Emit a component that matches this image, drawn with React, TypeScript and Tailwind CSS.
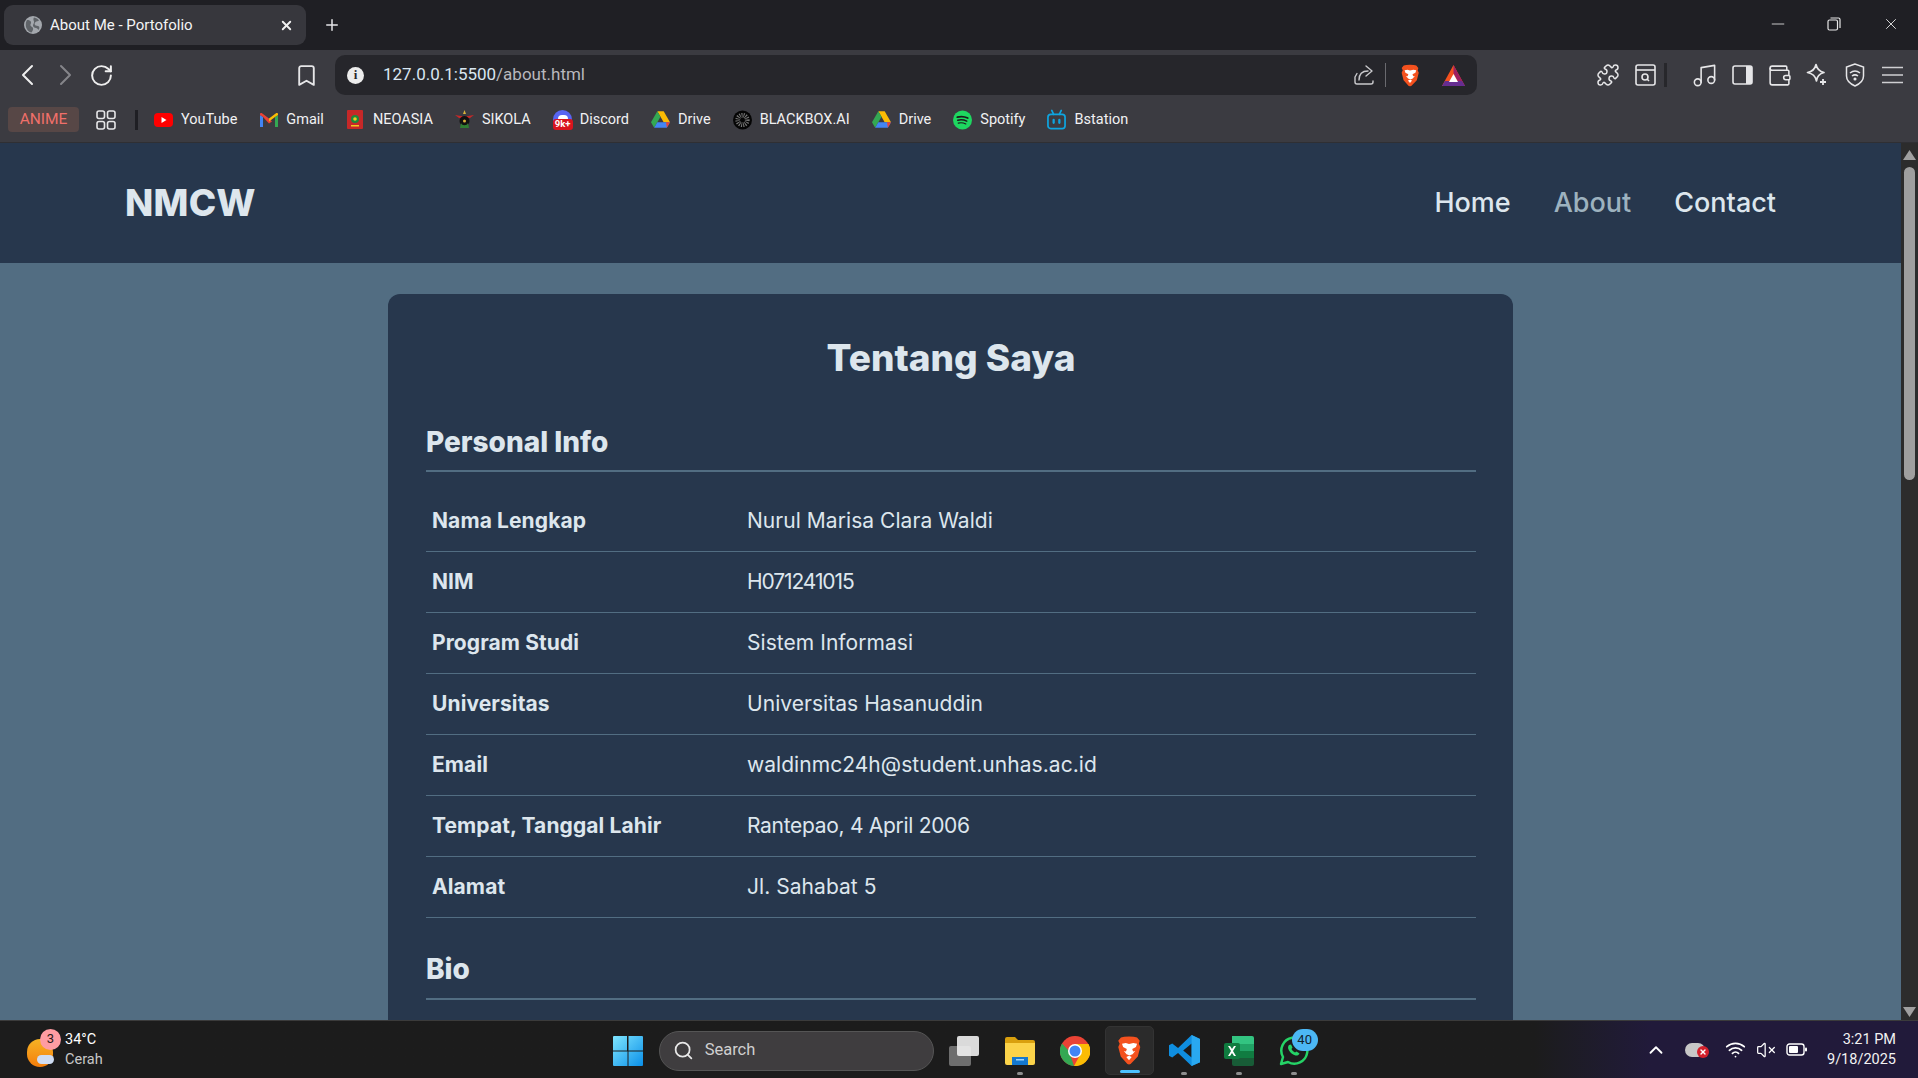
import React from "react";
import { RotateCw, Bookmark, Plus, X, Minus, Puzzle, Music, Wallet, Search, ChevronUp, Wifi, VolumeX } from "lucide-react";

const Brave = ({ s = 24 }: { s?: number }) => (
  <svg width={s} height={s + 3} viewBox="0 0 24 27">
    <path d="M12 .5 16.500 .8 19.500 1.500 22 4.500l-.8 2.700 1.300 3-2.300 9L13.500 26 12 26.500 10.500 26l-6.200-6.800-2.300-9 1.300-3L2 4.500 4.500 1.500 7.500 .8Z" fill="#f4511e" />
    <path d="M12 7.500 9 6.500 5.500 7.200l1 3 3.500 1.800-.8 2.500-2-.5 2.500 3 2.800 1.200 2.800-1.200 2.500-3-2 .5-.8-2.500 3.500-1.800 1-3-3.500-.7Z" fill="#fff" />
    <path d="M9.500 19.500 12 18.500l2.500 1L12 22.500Z" fill="#fff" />
  </svg>
);
const Drive = () => (
  <svg width="19" height="17" viewBox="0 0 24 21">
    <path d="M8 0h8l8 14h-8Z" fill="#fbbc04" />
    <path d="M8 0 0 14l4 7 8-14Z" fill="#34a853" />
    <path d="M8 14h16l-4 7H4Z" fill="#4285f4" />
    <path d="m20 21 4-7h-5Z" fill="#ea4335" />
  </svg>
);
const Bookmarklet = ({ icon, label, cls }: { icon: React.ReactNode; label: string; cls: string }) => (
  <div className={`flex items-center ${cls}`}>
    <span className="flex w-[19px] justify-center">{icon}</span>
    <span className="ml-[8px] text-[14.500px] text-[#f1f1f3]">{label}</span>
  </div>
);
const Tool = ({ children }: { children: React.ReactNode }) => (
  <span className="flex h-full w-[37.500px] items-center justify-center text-[#e6e6e8]">{children}</span>
);
const Row = ({ k, v, cls = "tracking-[0.05px]" }: { k: string; v: string; cls?: string }) => (
  <div className="flex h-[61px] items-center border-b border-[#526d82] px-[6px] text-[21px] text-[#dde6ed]">
    <span className="w-[315px] font-bold tracking-[0.1px]">{k}</span>
    <span className={cls}>{v}</span>
  </div>
);
const Dot = ({ cls }: { cls: string }) => <span className={`block h-[3px] rounded-full bg-[#8e8e8e] ${cls}`} />;

export default function App() {
  return (
    <div className="flex h-[1078px] w-[1918px] flex-col overflow-hidden bg-[#1f1f24] font-['Roboto',sans-serif] text-white">
      {/* tab strip */}
      <div className="flex h-[50px] shrink-0 items-start bg-[#1f1f24]">
        <div className="ml-[4px] mt-[5px] flex h-[40px] w-[302px] items-center rounded-[9px] bg-[#37373d] pl-[20px]">
          <svg width="18" height="18" viewBox="0 0 18 18"><circle cx="9" cy="9" r="9" fill="#a3a7ad" /><path d="M3 4c2 0 3.500.5 4 2s-1 2-.5 3.500 2 1 2.500 2.500-.5 3-1.500 4.500C4.500 16 2 13 1.800 9.500 1.700 7.500 2 5.500 3 4ZM10 1.500c2 .3 4 1.500 5 3-1 1-2.500.5-3.500 1.500s-1 2-.5 3 3 .5 4 1.500c.5.500.5 2-.5 3.500-.5-1-1.500-2-2.500-2-1.500 0-3-1-3-2.500S10.500 7 10 5.500 9 3 10 1.500Z" fill="#5f6368" /></svg>
          <span className="ml-[8px] text-[15px] text-[#f4f4f5]">About Me - Portofolio</span>
          <X size={15} strokeWidth={3} className="ml-auto mr-[12px] text-[#f1f1f1]" />
        </div>
        <Plus size={18} strokeWidth={2} className="ml-[17px] mt-[16px] text-[#e5e5e7]" />
        <div className="ml-auto mr-[18px] flex h-[48px] items-center text-[#e8e8e8]">
          <Minus size={20} strokeWidth={1} />
          <svg className="ml-[39px]" width="14" height="14" viewBox="0 0 14 14" fill="none" stroke="currentColor" strokeWidth="1.200"><rect x="1" y="3" width="9.500" height="10" rx="1.500" /><path d="M3.500 1h8A1.500 1.500 0 0 1 13 2.500V11" /></svg>
          <X className="ml-[41px]" size={18} strokeWidth={1.2} />
        </div>
      </div>
      {/* toolbar */}
      <div className="flex h-[45px] shrink-0 items-end bg-[#3b3b41]">
        <div className="flex h-[40px] w-[335px] items-center">
          <svg className="ml-[14px]" width="28" height="28" viewBox="0 0 28 28" fill="none" stroke="#eeeeee" strokeWidth="2" strokeLinecap="round" strokeLinejoin="round"><path d="M18 5 9 14l9 9" /></svg>
          <svg className="ml-[9px]" width="28" height="28" viewBox="0 0 28 28" fill="none" stroke="#85858a" strokeWidth="2" strokeLinecap="round" strokeLinejoin="round"><path d="m10 5 9 9-9 9" /></svg>
          <RotateCw size={25} strokeWidth={1.900} className="ml-[10px] text-[#eeeeee]" />
          <Bookmark size={25} strokeWidth={1.800} className="ml-[180px] text-[#e6e6e8]" />
        </div>
        <div className="flex h-[40px] w-[1142px] items-center rounded-[10px] bg-[#26262b]">
          <span className="ml-[12px] flex h-[17px] w-[17px] items-center justify-center rounded-full bg-[#ececec] font-['Liberation_Serif',serif] text-[13px] font-bold text-[#26262b]">i</span>
          <span className="ml-[19px] text-[17px] text-[#d9e7f2]">127.0.0.1:5500<span className="text-[#b8b8bd]">/about.html</span></span>
          <svg className="ml-auto" width="20" height="20" viewBox="0 0 20 20" fill="none" stroke="#c9c9cc" strokeWidth="1.400" strokeLinecap="round" strokeLinejoin="round"><path d="M3 8.500 1 12v5a2 2 0 0 0 2 2h14a2 2 0 0 0 2-2v-1" /><path d="M5 15c0-6 3-9 9-9" /><path d="M12 1l6 5-6 5" /></svg>
          <span className="ml-[11px] h-[24px] w-[1px] bg-[#6a6a6f]" />
          <span className="ml-[14px] flex"><Brave s={20} /></span>
          <svg className="ml-[22px] mr-[12px]" width="23" height="21" viewBox="0 0 23 21">
            <path d="M11.500 0 23 21H0Z" fill="#f4511e" />
            <path d="M11.500 0 23 21h-5L11.500 8Z" fill="#9e1f63" />
            <path d="M0 21l3-5h17l3 5Z" fill="#662d91" />
            <path d="M11.500 9 16 17H7Z" fill="#fff" />
          </svg>
        </div>
        <div className="flex h-[40px] flex-1 items-center pl-[112px]">
          <Tool><Puzzle size={24} strokeWidth={1.500} /></Tool>
          <Tool>
            <svg width="21" height="22" viewBox="0 0 21 22" fill="none" stroke="currentColor" strokeWidth="1.600"><rect x="1" y="1" width="19" height="20" rx="2" /><path d="M1 6h19" /><circle cx="10" cy="13" r="3" /><path d="m12 15 2 2" /></svg>
          </Tool>
          <span className="h-[24px] w-[3px] bg-[#27272b]" />
          <span className="w-[19px]" />
          <Tool><Music size={27} strokeWidth={1.400} /></Tool>
          <Tool>
            <svg width="21" height="20" viewBox="0 0 21 20"><rect x="1" y="1" width="19" height="18" rx="2" fill="none" stroke="currentColor" strokeWidth="1.600" /><path d="M14 1h4a2 2 0 0 1 2 2v14a2 2 0 0 1-2 2h-4Z" fill="currentColor" /></svg>
          </Tool>
          <Tool><Wallet size={25} strokeWidth={1.500} /></Tool>
          <Tool>
            <svg width="22" height="24" viewBox="0 0 22 24" fill="none" stroke="currentColor" strokeWidth="1.700" strokeLinejoin="round"><path d="M10 1.500c1 4.500 3.500 7 8 8-4.500 1-7 3.500-7.500 8.500C9.500 13 7 10.500 1.500 9.500c5.500-1 7.500-3.500 8.500-8Z" /><path d="M17 16v6M14 19h6" strokeWidth="1.800" /></svg>
          </Tool>
          <Tool>
            <svg width="20" height="24" viewBox="0 0 20 24" fill="none" stroke="currentColor" strokeWidth="1.500"><path d="M10 1 1.500 4v9c0 5 4 8 8.500 10 4.500-2 8.500-5 8.500-10V4Z" /><path d="M5 10c3-2.500 7-2.500 10 0M7 13c2-1.500 4-1.500 6 0" /><circle cx="10" cy="16" r=".8" fill="currentColor" /></svg>
          </Tool>
          <Tool>
            <svg width="21" height="18" viewBox="0 0 21 18" stroke="#cfcfd2" strokeWidth="1.600"><path d="M0 1.500h21M0 9h21M0 16.500h21" /></svg>
          </Tool>
        </div>
      </div>
      {/* bookmarks */}
      <div className="flex h-[48px] shrink-0 items-center border-b border-[#2f2f33] bg-[#3b3b41] pt-[2px]">
        <span className="ml-[8px] flex h-[25px] w-[71px] items-center justify-center rounded-[4px] bg-[#574746] text-[15.500px] text-[#f0706a]">ANIME</span>
        <svg className="ml-[17px]" width="20" height="20" viewBox="0 0 20 20" fill="none" stroke="#e6e6e8" strokeWidth="1.600"><rect x="1" y="1" width="7.500" height="7.500" rx="2" /><rect x="11.500" y="1" width="7.500" height="7.500" rx="2" /><rect x="1" y="11.500" width="7.500" height="7.500" rx="2" /><rect x="11.500" y="11.500" width="7.500" height="7.500" rx="2" /></svg>
        <span className="ml-[19px] h-[20px] w-[3px] bg-[#1f1f24]" />
        <Bookmarklet cls="ml-[16px]" label="YouTube" icon={<svg width="19" height="14" viewBox="0 0 19 14"><rect width="19" height="14" rx="4" fill="#f00" /><path d="m7.500 4 5 3-5 3Z" fill="#fff" /></svg>} />
        <Bookmarklet cls="ml-[22px]" label="Gmail" icon={<svg width="18" height="14" viewBox="0 0 18 14"><path d="M0 14V2l3 2v10Z" fill="#4285f4" /><path d="M15 14V4l3-2v12Z" fill="#34a853" /><path d="M3 4 0 2V1c0-1 1-1.500 2-.8L9 5.500l3 3-3 2Z" fill="#ea4335" /><path d="M9 5.500 16 .2c1-.7 2-.2 2 .8v1l-3 2-6 4.500Z" fill="#fbbc04" /></svg>} />
        <Bookmarklet cls="ml-[22px]" label="NEOASIA" icon={<svg width="16" height="19" viewBox="0 0 16 19"><rect width="16" height="19" rx="1" fill="#c62828" /><circle cx="8" cy="9" r="4" fill="#1b8a3a" /><circle cx="8" cy="9" r="1.800" fill="#f3c623" /><rect x="4" y="15" width="8" height="1.500" fill="#f3c623" /></svg>} />
        <Bookmarklet cls="ml-[22px]" label="SIKOLA" icon={<svg width="19" height="20" viewBox="0 0 19 20"><path d="M9.500 0 11 4H8Z" fill="#d9b23a" /><path d="M0 5l6 1h7l6-1-4 3H4Z" fill="#c62828" /><circle cx="9.500" cy="11" r="5" fill="#111" /><path d="M6 13c1 3 6 3 7 0l1 5H5Z" fill="#2e7d32" /><circle cx="9.500" cy="11" r="1.500" fill="#d9b23a" /></svg>} />
        <Bookmarklet cls="ml-[22px]" label="Discord" icon={<span className="relative flex h-[20px] w-[20px] justify-center rounded-full bg-[#5865f2]"><span className="absolute left-[5px] top-[5px] h-[4px] w-[10px] rounded-t-full bg-white" /><span className="absolute bottom-0 left-0 flex h-[11px] w-[20px] items-center justify-center rounded-[3px] bg-[#d8141d] text-[9.500px] font-bold leading-none text-white">9k+</span></span>} />
        <Bookmarklet cls="ml-[22px]" label="Drive" icon={<Drive />} />
        <Bookmarklet cls="ml-[22px]" label="BLACKBOX.AI" icon={<svg width="20" height="20" viewBox="0 0 20 20"><circle cx="10" cy="10" r="10" fill="#050505" /><circle cx="10" cy="10" r="5" fill="none" stroke="#777" strokeWidth="5" strokeDasharray="1 1" /></svg>} />
        <Bookmarklet cls="ml-[22px]" label="Drive" icon={<Drive />} />
        <Bookmarklet cls="ml-[22px]" label="Spotify" icon={<svg width="20" height="20" viewBox="0 0 20 20" fill="none" stroke="#1b1b1b" strokeLinecap="round"><circle cx="10" cy="10" r="10" fill="#1ed760" stroke="none" /><path d="M4.500 7c3.500-1 7.500-.8 11 1" strokeWidth="1.800" /><path d="M5 10.300c3-.8 6.500-.5 9.500 1" strokeWidth="1.500" /><path d="M5.500 13.300c2.500-.6 5.500-.4 8 .9" strokeWidth="1.200" /></svg>} />
        <Bookmarklet cls="ml-[22px]" label="Bstation" icon={<svg width="20" height="21" viewBox="0 0 20 21" fill="none" stroke="#0ea5e0" strokeWidth="1.800" strokeLinecap="round"><rect x="1" y="5" width="18" height="15" rx="3" /><path d="M5 1l2 4M15 1l-2 4" /><path d="M7 11v3M13 11v3" strokeWidth="2.400" /></svg>} />
      </div>
      {/* page */}
      <div className="flex min-h-0 flex-1">
        <div className="min-w-0 flex-1 overflow-hidden bg-[#526d82]">
          <nav className="flex h-[120px] items-center justify-between bg-[#27374d] pl-[125px] pr-[125px] font-['Inter',sans-serif] text-[#dde6ed]">
            <span className="text-[37px] font-extrabold tracking-[0.2px]">NMCW</span>
            <div className="flex gap-[43px] text-[27px] font-medium">
              <span>Home</span>
              <span className="text-[#9db2bf]">About</span>
              <span>Contact</span>
            </div>
          </nav>
          <main className="ml-[388px] mt-[31px] w-[1125px] rounded-t-[12px] bg-[#27374d] pb-[120px] pl-[38px] pr-[37px] pt-[39px] font-['Inter',sans-serif] text-[#dde6ed]">
            <h1 className="text-center text-[37px] font-extrabold leading-[50px]">Tentang Saya</h1>
            <h2 className="mt-[39px] border-b-2 border-[#526d82] pb-[7px] text-[28px] font-extrabold leading-[41px]">Personal Info</h2>
            <div className="mt-[19px]">
              <Row k="Nama Lengkap" v="Nurul Marisa Clara Waldi" />
              <Row k="NIM" v="H071241015" cls="tracking-[-1.100px]" />
              <Row k="Program Studi" v="Sistem Informasi" />
              <Row k="Universitas" v="Universitas Hasanuddin" />
              <Row k="Email" v="waldinmc24h@student.unhas.ac.id" />
              <Row k="Tempat, Tanggal Lahir" v="Rantepao, 4 April 2006" cls="tracking-[-0.300px]" />
              <Row k="Alamat" v="Jl. Sahabat 5" />
            </div>
            <h2 className="mt-[31px] border-b-2 border-[#526d82] pb-[8px] text-[28px] font-extrabold leading-[41px]">Bio</h2>
          </main>
        </div>
        <div className="flex w-[17px] shrink-0 flex-col items-center justify-between bg-[#2c2c2c] pb-[3px] pt-[7px]">
          <div className="flex flex-col items-center">
            <svg width="13" height="10" viewBox="0 0 13 10"><path d="M6.500 0 13 10H0Z" fill="#a0a0a0" /></svg>
            <div className="mt-[7px] h-[313px] w-[11px] rounded-full bg-[#9f9f9f]" />
          </div>
          <svg width="13" height="10" viewBox="0 0 13 10"><path d="M0 0h13L6.500 10Z" fill="#a0a0a0" /></svg>
        </div>
      </div>
      {/* taskbar */}
      <div className="flex h-[58px] shrink-0 items-center border-t border-[#3b3b3b] bg-gradient-to-r from-[#1c1c1c] from-[80%] to-[#211a3a] to-[86%] text-white">
        <div className="relative ml-[27px] flex h-[40px] w-[30px] items-center">
          <span className="mt-[6px] block h-[28px] w-[26px] rounded-full bg-gradient-to-b from-[#f5b324] to-[#f47d0a]" />
          <span className="absolute left-[10px] top-[25px] h-[9px] w-[17px] rounded-full bg-[#cfdcf2]" />
          <span className="absolute left-[13px] top-[-1px] flex h-[21px] w-[21px] items-center justify-center rounded-full bg-[#ff9ca3] text-[13px] text-[#2a1a1a]">3</span>
        </div>
        <div className="ml-[8px] flex flex-col pt-[1px] text-[14.500px] leading-[20px]">
          <span>34°C</span>
          <span className="text-[#c8c8c8]">Cerah</span>
        </div>
        {/* centre */}
        <div className="ml-[510px] flex h-full items-center pt-[2px]">
          <svg width="30" height="30" viewBox="0 0 30 30"><defs><linearGradient id="w" x1="0" y1="0" x2="1" y2="1"><stop offset="0" stopColor="#7fe6ff" /><stop offset="1" stopColor="#0a8fe8" /></linearGradient></defs><path d="M0 1a1 1 0 0 1 1-1h13v14.500H0ZM15.500 0H29a1 1 0 0 1 1 1v13.500H15.500ZM0 15.500h14.500V30H1a1 1 0 0 1-1-1ZM15.500 15.500H30V29a1 1 0 0 1-1 1H15.500Z" fill="url(#w)" /></svg>
          <div className="ml-[16px] flex h-[40px] w-[275px] items-center rounded-full border border-[#555] bg-[#3f3d3f]">
            <Search size={21} strokeWidth={2} className="ml-[13px] text-[#e8e8e8]" />
            <span className="ml-[11px] text-[16.500px] text-[#cfcfcf]">Search</span>
          </div>
          <div className="relative ml-[15px] h-[30px] w-[30px]">
            <span className="absolute left-0 bottom-0 h-[20px] w-[22px] rounded-[2px] bg-[#6e6e6e]" />
            <span className="absolute right-0 top-0 h-[20px] w-[22px] rounded-[2px] bg-[#efefef] opacity-90" />
          </div>
          <div className="relative ml-[26px] flex h-full w-[30px] items-center">
            <svg width="30" height="28" viewBox="0 0 30 28"><path d="M0 2a2 2 0 0 1 2-2h8l3 3h15a2 2 0 0 1 2 2v3H0Z" fill="#d9a00e" /><path d="M0 6h30v20a2 2 0 0 1-2 2H2a2 2 0 0 1-2-2Z" fill="#fbd34a" /><path d="M7 20h16v8H7Z" fill="#1478cf" /><rect x="11" y="22" width="8" height="1.500" fill="#9dd6ff" /></svg>
            <Dot cls="absolute bottom-[3px] left-[12px] w-[6px]" />
          </div>
          <svg className="ml-[25px]" width="30" height="30" viewBox="0 0 30 30"><circle cx="15" cy="15" r="15" fill="#ea4335" /><path d="M3 24A15 15 0 0 1 2 7.500L9 15l5 15A15 15 0 0 1 3 24Z" fill="#34a853" /><path d="M15 8h13.500A15 15 0 0 1 14 30l6-11Z" fill="#fbbc04" /><circle cx="15" cy="15" r="7" fill="#fff" /><circle cx="15" cy="15" r="5.500" fill="#4285f4" /></svg>
          <div className="relative ml-[15px] flex h-[49px] w-[49px] items-center justify-center rounded-[5px] border border-[#333] bg-[#2b2b2b]">
            <Brave s={26} />
            <span className="absolute bottom-[1px] left-[14px] h-[3px] w-[20px] rounded-full bg-[#4cc2ff]" />
          </div>
          <div className="relative ml-[15px] flex h-full w-[31px] items-center">
            <svg width="31" height="31" viewBox="0 0 24 24"><path d="M17.500 0 24 3v18l-6.500 3L7 14l-4.500 3.500L0 16V8l2.500-1.500L7 10Zm0 6.500L11 12l6.500 5.500Z" fill="#0f8ee0" /><path d="M17.500 0 24 3v18l-6.500 3Z" fill="#29a8f0" /></svg>
            <Dot cls="absolute bottom-[3px] left-[12px] w-[6px]" />
          </div>
          <div className="relative ml-[24px] flex h-full w-[30px] items-center">
            <svg width="30" height="30" viewBox="0 0 30 30"><path d="M8 0h20a2 2 0 0 1 2 2v6H8Z" fill="#33c481" /><path d="M8 8h22v7H8Z" fill="#21a366" /><path d="M8 15h22v7H8Z" fill="#107c41" /><path d="M8 22h22v6a2 2 0 0 1-2 2H10a2 2 0 0 1-2-2Z" fill="#185c37" /><rect y="7" width="16" height="16" rx="2" fill="#0f7b3f" /><path d="m4 10 2 0 2 3 2-3 2 0-3 5 3 5-2 0-2-3-2 3-2 0 3-5Z" fill="#fff" /></svg>
            <Dot cls="absolute bottom-[3px] left-[12px] w-[6px]" />
          </div>
          <div className="relative ml-[25px] flex h-full w-[30px] items-center">
            <svg width="30" height="30" viewBox="0 0 30 30"><path d="M2 28l2-7A13 13 0 1 1 9 26Z" fill="none" stroke="#25d366" strokeWidth="2.500" strokeLinejoin="round" /><path d="M10 9c-1 1-1.500 3 0 5.500 1.500 2.500 4 4.500 6.500 5 2 .4 3.500-.8 4-2l-3-2-1.500 1c-1.500-.7-3-2.200-3.500-3.500l1-1.500-1.500-3Z" fill="#25d366" /></svg>
            <span className="absolute left-[13px] top-[6px] flex h-[22px] w-[26px] items-center justify-center rounded-full bg-[#4cb8f5] text-[13px] text-[#12222e]">40</span>
            <Dot cls="absolute bottom-[3px] left-[12px] w-[6px]" />
          </div>
        </div>
        {/* tray */}
        <div className="ml-auto flex h-full items-center text-white">
          <ChevronUp size={22} strokeWidth={2} />
          <span className="relative ml-[18px] block h-[14px] w-[20px] rounded-full bg-[#c7c7c7]">
            <span className="absolute right-[-4px] top-[3px] flex h-[12px] w-[12px] items-center justify-center rounded-full bg-[#d3202c]"><X size={8} strokeWidth={4} /></span>
          </span>
          <Wifi size={21} strokeWidth={2} className="ml-[20px]" />
          <VolumeX size={20} strokeWidth={1.500} className="ml-[10px]" />
          <svg className="ml-[10px]" width="21" height="13" viewBox="0 0 21 13"><rect x="1" y="1" width="17" height="11" rx="2.500" fill="none" stroke="#fff" strokeWidth="1.400" /><rect x="3" y="3" width="9" height="7" rx="1" fill="#fff" /><rect x="19" y="4.500" width="2" height="4" rx="1" fill="#fff" /></svg>
          <div className="ml-[20px] mr-[22px] flex flex-col items-end pt-[1px] text-[14.500px] leading-[20px] text-[#f2f2f2]">
            <span>3:21 PM</span>
            <span>9/18/2025</span>
          </div>
        </div>
      </div>
    </div>
  );
}
